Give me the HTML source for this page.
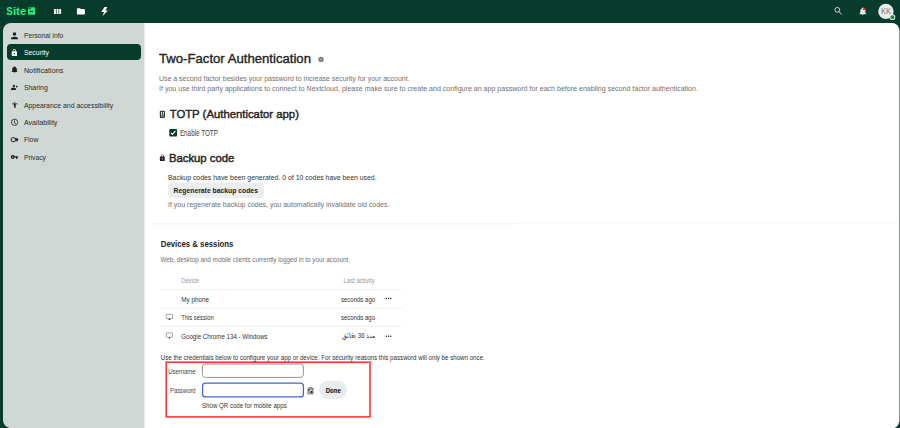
<!DOCTYPE html>
<html><head><meta charset="utf-8">
<style>
*{margin:0;padding:0}
html,body{width:900px;height:428px;overflow:hidden;background:#073b2c}
svg{position:absolute;left:0;top:0}
text{font-family:"Liberation Sans",sans-serif;white-space:pre}
</style></head><body>
<svg width="900" height="428" viewBox="0 0 900 428">
<!-- sidebar -->
<rect x="3" y="23" width="160" height="405.2" rx="8" fill="#cfd8d5"/>
<!-- main -->
<path d="M144.5,23 H892.2 A7,7 0 0 1 899.2,30 V421.3 A7,7 0 0 1 892.2,428.3 H144.5Z" fill="#ffffff"/>
<rect x="899" y="29" width="1" height="393" fill="#88928f"/>
<!-- highlight -->
<rect x="7" y="44" width="134" height="16" rx="4" fill="#073b2c"/>
<!-- nav icons -->
<g fill="#1e1e1e">
 <g transform="translate(9.25,30.55) scale(0.4375)"><path d="M12,4A4,4 0 0,1 16,8A4,4 0 0,1 12,12A4,4 0 0,1 8,8A4,4 0 0,1 12,4M12,14C16.42,14 20,15.79 20,18V20H4V18C4,15.79 7.58,14 12,14Z"/></g>
 <g transform="translate(10.6,65.6) scale(0.325)"><path d="M21,19V20H3V19L5,17V11C5,7.9 7.03,5.17 10,4.29C10,4.19 10,4.1 10,4A2,2 0 0,1 12,2A2,2 0 0,1 14,4C14,4.1 14,4.19 14,4.29C16.97,5.17 19,7.9 19,11V17L21,19M14,21A2,2 0 0,1 12,23A2,2 0 0,1 10,21"/></g>
 <circle cx="13.9" cy="85.9" r="1.15"/>
 <path d="M10.8,90 C10.8,88.2 12.2,87.5 13.5,87.5 C14.8,87.5 16.2,88.2 16.2,90Z"/>
 <path d="M16,85.6 L18,86.6 L16,87.7Z"/>
 <g transform="translate(11.2,101.5) scale(0.3)"><path d="M21,9H15V22H13V16H11V22H9V9H3V7H21M12,2A2,2 0 0,1 14,4A2,2 0 0,1 12,6C10.89,6 10,5.1 10,4C10,2.89 10.89,2 12,2Z"/></g>
 <circle cx="14.55" cy="122.3" r="3.15" fill="none" stroke="#2a2a2a" stroke-width="0.85"/><path d="M14.4,120.4 V122.6 L16,123.8" fill="none" stroke="#1e1e1e" stroke-width="0.8"/>
 <rect x="11.3" y="137.8" width="4" height="3.8" rx="1" fill="none" stroke="#1e1e1e" stroke-width="1"/>
 <path d="M15.3,138.6 H16.6 V137.4 L18.5,139.7 L16.6,142 V140.8 H15.3Z"/>
 <g transform="translate(10.5,153) scale(0.33)"><path d="M7,14A2,2 0 0,1 5,12A2,2 0 0,1 7,10A2,2 0 0,1 9,12A2,2 0 0,1 7,14M12.65,10C11.83,7.67 9.61,6 7,6A6,6 0 0,0 1,12A6,6 0 0,0 7,18C9.61,18 11.83,16.33 12.65,14H17V18H21V14H23V10H12.65Z"/></g>
</g>
<g transform="translate(10.37,48.67) scale(0.333)" fill="#ffffff"><path d="M12,17A2,2 0 0,0 14,15C14,13.89 13.1,13 12,13A2,2 0 0,0 10,15A2,2 0 0,0 12,17M18,8A2,2 0 0,1 20,10V20A2,2 0 0,1 18,22H6A2,2 0 0,1 4,20V10C4,8.89 4.9,8 6,8H7V6A5,5 0 0,1 12,1A5,5 0 0,1 17,6V8H18M12,3A3,3 0 0,0 9,6V8H15V6A3,3 0 0,0 12,3Z"/></g>

<!-- header icons -->
<g fill="#ffffff">
 <rect x="54" y="9" width="1.9" height="5" />
 <rect x="56.6" y="9" width="1.9" height="5" />
 <rect x="59.2" y="9" width="1.9" height="5" />
 <g transform="translate(76.1,6.6) scale(0.4)"><path d="M10,4H4C2.89,4 2,4.89 2,6V18A2,2 0 0,0 4,20H20A2,2 0 0,0 22,18V8C22,6.89 21.1,6 20,6H12L10,4Z"/></g>
 <path d="M104.6,7 L101.2,12 H104 L102.6,15.9 L108,10.6 H105.3 L107.4,7Z"/>
</g>
<!-- logo icon -->
<g fill="#25ee7e" style="font-family:'Liberation Sans'" font-weight="700">
 <text x="6.2" y="14.6" font-size="11" textLength="6.6" lengthAdjust="spacingAndGlyphs">S</text>
 <g transform="translate(12.9,14.6) scale(1,1.1)"><text x="0" y="0" font-size="10.4" textLength="13.4" lengthAdjust="spacingAndGlyphs">ite</text></g>
</g>
<rect x="28" y="7.3" width="7" height="7.4" fill="#25ee7e"/>
<rect x="28.4" y="7.5" width="2.6" height="1.6" fill="#0d6b45"/>
<rect x="29.4" y="10.7" width="3.6" height="1.4" fill="#073b2c"/>
<!-- search -->
<circle cx="837.3" cy="9.8" r="2.4" fill="none" stroke="#e0e0e0" stroke-width="0.9"/>
<path d="M839,11.6 L841.6,14.4" stroke="#e0e0e0" stroke-width="1"/>
<!-- bell -->
<g transform="translate(858.4,6.8) scale(0.37)" fill="#e8e8e8"><path d="M21,19V20H3V19L5,17V11C5,7.9 7.03,5.17 10,4.29C10,4.19 10,4.1 10,4A2,2 0 0,1 12,2A2,2 0 0,1 14,4C14,4.1 14,4.19 14,4.29C16.97,5.17 19,7.9 19,11V17L21,19M14,21A2,2 0 0,1 12,23A2,2 0 0,1 10,21"/></g>
<path d="M864.3,7.3 L866.3,10 L862.4,10Z" fill="#ff2020"/>
<!-- avatar -->
<circle cx="885.9" cy="11.4" r="7.7" fill="#ebebeb"/>
<text x="881.1" y="14" font-size="8.2" fill="#707070" textLength="9.8" lengthAdjust="spacingAndGlyphs" style="font-family:'Liberation Sans'">KK</text>
<circle cx="892.4" cy="17.2" r="2.9" fill="#f4f4f4"/>
<circle cx="892.4" cy="17.2" r="2.05" fill="#1f8a46"/>

<!-- info icon -->
<circle cx="321" cy="59.4" r="2.7" fill="#7d7d7d"/><rect x="320.6" y="58.6" width="0.8" height="2.2" fill="#cfcfcf"/>
<!-- TOTP icon -->
<rect x="159.8" y="110.8" width="5.2" height="7.2" rx="0.9" fill="#2f3d3d"/>
<rect x="161.0" y="111.9" width="0.9" height="2.9" fill="#f2f2f2"/>
<rect x="162.9" y="111.9" width="0.9" height="2.9" fill="#f2f2f2"/>
<rect x="160.9" y="115.2" width="3" height="1.6" fill="#8d9999"/>
<!-- lock icon backup -->
<g transform="translate(158.6,154.1) scale(0.31)" fill="#222"><path d="M12,17A2,2 0 0,0 14,15C14,13.89 13.1,13 12,13A2,2 0 0,0 10,15A2,2 0 0,0 12,17M18,8A2,2 0 0,1 20,10V20A2,2 0 0,1 18,22H6A2,2 0 0,1 4,20V10C4,8.89 4.9,8 6,8H7V6A5,5 0 0,1 12,1A5,5 0 0,1 17,6V8H18M12,3A3,3 0 0,0 9,6V8H15V6A3,3 0 0,0 12,3Z"/></g>
<!-- checkbox -->
<rect x="169.3" y="128.9" width="7.7" height="7.7" rx="0.8" fill="#073b2c"/>
<path d="M170.9,132.8 L172.5,134.4 L175.4,130.9" fill="none" stroke="#fff" stroke-width="1.1"/>
<!-- button -->
<rect x="168" y="182.5" width="96" height="15.2" rx="4" fill="#ebedee"/>
<!-- separator -->
<rect x="150" y="223.4" width="364" height="1" fill="#f3f4f4"/>
<rect x="514" y="223.2" width="385" height="1" fill="#f8f9f9"/>
<!-- table lines -->
<rect x="160" y="289" width="241.8" height="0.8" fill="#ededed"/>
<rect x="160" y="307.8" width="241.8" height="0.8" fill="#ededed"/>
<rect x="160" y="325.9" width="241.8" height="0.8" fill="#ededed"/>
<!-- monitor icons -->
<g fill="none" stroke="#8a8f8f" stroke-width="0.8">
 <rect x="166.3" y="314.3" width="6.2" height="4.3" rx="0.5"/>
 <rect x="166.3" y="332.9" width="6.2" height="4.3" rx="0.5"/>
</g>
<g fill="#333">
 <rect x="168.6" y="318.7" width="1.7" height="1.2" rx="0.5"/>
 <rect x="168.6" y="337.3" width="1.7" height="1.2" rx="0.5"/>
</g>
<!-- dots -->
<g fill="#222">
 <circle cx="386.3" cy="298.6" r="0.75"/><circle cx="388.5" cy="298.6" r="0.75"/><circle cx="390.7" cy="298.6" r="0.75"/>
 <circle cx="386.3" cy="336.2" r="0.75"/><circle cx="388.5" cy="336.2" r="0.75"/><circle cx="390.7" cy="336.2" r="0.75"/>
</g>
<!-- form -->
<rect x="166.2" y="362.2" width="203.8" height="54.7" fill="none" stroke="#ff2c2c" stroke-width="1.5"/>
<rect x="202.4" y="364.0" width="101" height="13.4" rx="3" fill="#fff" stroke="#888" stroke-width="0.9"/>
<rect x="202.5" y="383.1" width="100.9" height="13.8" rx="3" fill="#fff" stroke="#4465c8" stroke-width="1.2"/>
<rect x="307.3" y="387.6" width="6.4" height="7" rx="1" fill="#9a9e9e"/>
<rect x="309.5" y="387" width="2" height="1.2" fill="#777"/>
<circle cx="308.8" cy="389.7" r="0.7" fill="#333"/><circle cx="312.3" cy="389.7" r="0.7" fill="#333"/>
<rect x="310.9" y="391" width="1.5" height="2.2" fill="#222"/>
<rect x="310.2" y="390.2" width="2.6" height="0.8" fill="#f4f4f4"/>
<rect x="318.8" y="380.8" width="28.4" height="18.2" rx="9.1" fill="#e9ecef"/>

<text x="23.90" y="37.90" font-size="7.9" font-weight="400" fill="#2b2b2b" textLength="39.48" lengthAdjust="spacingAndGlyphs">Personal info</text>
<text x="23.90" y="55.30" font-size="7.9" font-weight="400" fill="#ffffff" textLength="25.05" lengthAdjust="spacingAndGlyphs">Security</text>
<text x="23.90" y="72.50" font-size="7.9" font-weight="400" fill="#2b2b2b" textLength="39.45" lengthAdjust="spacingAndGlyphs">Notifications</text>
<text x="23.90" y="90.10" font-size="7.9" font-weight="400" fill="#2b2b2b" textLength="23.84" lengthAdjust="spacingAndGlyphs">Sharing</text>
<text x="23.90" y="107.60" font-size="7.9" font-weight="400" fill="#2b2b2b" textLength="89.25" lengthAdjust="spacingAndGlyphs">Appearance and accessibility</text>
<text x="23.90" y="125.00" font-size="7.9" font-weight="400" fill="#2b2b2b" textLength="33.55" lengthAdjust="spacingAndGlyphs">Availability</text>
<text x="23.90" y="142.20" font-size="7.9" font-weight="400" fill="#2b2b2b" textLength="14.44" lengthAdjust="spacingAndGlyphs">Flow</text>
<text x="23.90" y="159.50" font-size="7.9" font-weight="400" fill="#2b2b2b" textLength="22.05" lengthAdjust="spacingAndGlyphs">Privacy</text>
<text x="159.00" y="63.00" font-size="12.6" font-weight="400" fill="#222" textLength="152.00" lengthAdjust="spacingAndGlyphs" stroke="#222" stroke-width="0.35">Two-Factor Authentication</text>
<text x="159.00" y="80.80" font-size="8.1" font-weight="400" fill="#6f6f6f" textLength="250.51" lengthAdjust="spacingAndGlyphs">Use a second factor besides your password to increase security for your account.</text>
<text x="159.00" y="90.90" font-size="8.1" font-weight="400" fill="#6f6f6f" textLength="538.92" lengthAdjust="spacingAndGlyphs">If you use third party applications to connect to Nextcloud, please make sure to create and configure an app password for each before enabling second factor authentication.</text>
<text x="169.70" y="118.20" font-size="11.8" font-weight="400" fill="#222" textLength="129.23" lengthAdjust="spacingAndGlyphs" stroke="#222" stroke-width="0.42">TOTP (Authenticator app)</text>
<text x="179.90" y="135.70" font-size="8.3" font-weight="400" fill="#444" textLength="38.05" lengthAdjust="spacingAndGlyphs">Enable TOTP</text>
<text x="168.90" y="162.00" font-size="11.4" font-weight="400" fill="#222" textLength="65.43" lengthAdjust="spacingAndGlyphs" stroke="#222" stroke-width="0.42">Backup code</text>
<text x="168.00" y="180.10" font-size="8.0" font-weight="400" fill="#333" textLength="208.59" lengthAdjust="spacingAndGlyphs">Backup codes have been generated. 0 of 10 codes have been used.</text>
<text x="173.60" y="192.70" font-size="7.1" font-weight="700" fill="#222" textLength="84.35" lengthAdjust="spacingAndGlyphs">Regenerate backup codes</text>
<text x="168.00" y="206.70" font-size="7.4" font-weight="400" fill="#6f6f6f" textLength="221.45" lengthAdjust="spacingAndGlyphs">If you regenerate backup codes, you automatically invalidate old codes.</text>
<text x="160.80" y="246.90" font-size="9.2" font-weight="700" fill="#222" textLength="72.59" lengthAdjust="spacingAndGlyphs">Devices &amp; sessions</text>
<text x="160.40" y="261.60" font-size="7.3" font-weight="400" fill="#6f6f6f" textLength="189.62" lengthAdjust="spacingAndGlyphs">Web, desktop and mobile clients currently logged in to your account.</text>
<text x="181.30" y="282.90" font-size="6.8" font-weight="400" fill="#9a9a9a" textLength="17.81" lengthAdjust="spacingAndGlyphs">Device</text>
<text x="343.50" y="283.10" font-size="6.8" font-weight="400" fill="#9a9a9a" textLength="31.17" lengthAdjust="spacingAndGlyphs">Last activity</text>
<text x="181.20" y="301.50" font-size="7.0" font-weight="400" fill="#333" textLength="27.90" lengthAdjust="spacingAndGlyphs">My phone</text>
<text x="340.90" y="301.50" font-size="7.0" font-weight="400" fill="#333" textLength="34.21" lengthAdjust="spacingAndGlyphs">seconds ago</text>
<text x="181.20" y="319.80" font-size="6.8" font-weight="400" fill="#333" textLength="32.51" lengthAdjust="spacingAndGlyphs">This session</text>
<text x="340.90" y="319.90" font-size="6.8" font-weight="400" fill="#333" textLength="34.11" lengthAdjust="spacingAndGlyphs">seconds ago</text>
<text x="181.20" y="339.00" font-size="6.8" font-weight="400" fill="#333" textLength="86.25" lengthAdjust="spacingAndGlyphs">Google Chrome 134 - Windows</text>
<text x="341.90" y="338.30" font-size="6.8" font-weight="400" fill="#333" textLength="33.30" lengthAdjust="spacingAndGlyphs">منذ 36 دقائق</text>
<text x="160.70" y="359.90" font-size="6.8" font-weight="400" fill="#333" textLength="324.10" lengthAdjust="spacingAndGlyphs">Use the credentials below to configure your app or device. For security reasons this password will only be shown once.</text>
<text x="168.30" y="373.50" font-size="7.2" font-weight="400" fill="#444" textLength="27.30" lengthAdjust="spacingAndGlyphs">Username</text>
<text x="170.10" y="392.50" font-size="7.2" font-weight="400" fill="#444" textLength="25.50" lengthAdjust="spacingAndGlyphs">Password</text>
<text x="202.00" y="408.10" font-size="6.9" font-weight="400" fill="#333" textLength="84.71" lengthAdjust="spacingAndGlyphs">Show QR code for mobile apps</text>
<text x="325.80" y="392.50" font-size="7.0" font-weight="700" fill="#222" textLength="14.91" lengthAdjust="spacingAndGlyphs" stroke="#222" stroke-width="0.15">Done</text>
</svg>
</body></html>
